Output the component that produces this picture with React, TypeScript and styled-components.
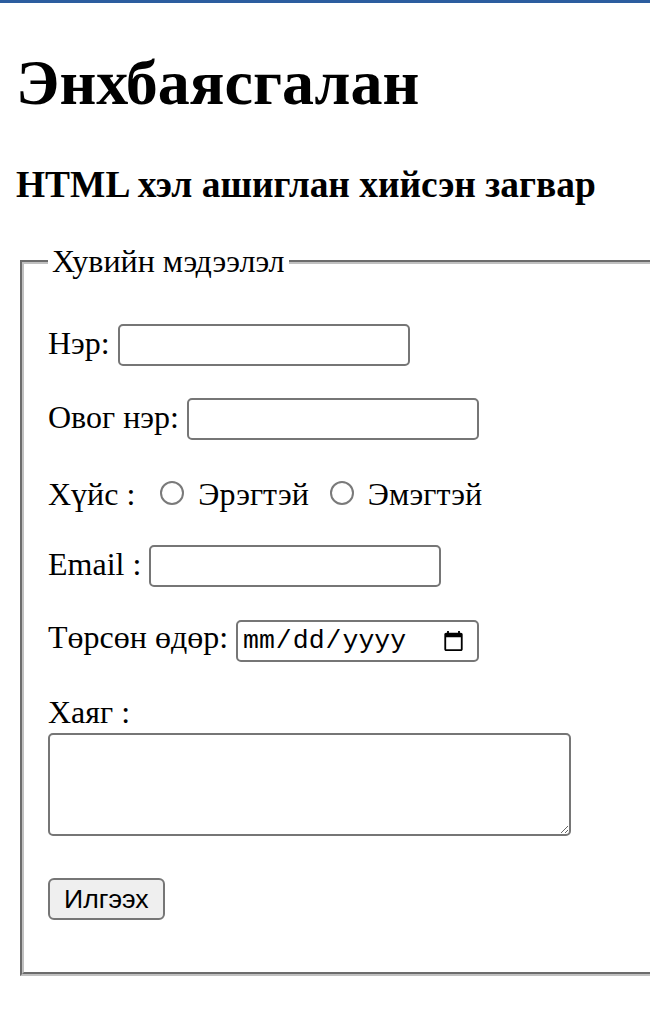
import React from 'react';
import styled, { createGlobalStyle } from 'styled-components';

const GlobalStyle = createGlobalStyle`
  html {
    border-top: 3px solid #2c5d9f;
    overflow: hidden;
  }
  body {
    margin: 0 0 16px 16px;
    font-family: "Liberation Serif", "Times New Roman", serif;
    font-size: 32px;
    color: #000;
    background: #fff;
  }
`;

const Title = styled.h1`
  font-size: 64px;
  font-weight: bold;
  margin: 42.88px 0;
`;

const Subtitle = styled.h3`
  font-size: 37.44px;
  font-weight: bold;
  margin: 37.44px 0;
`;

// the box runs on past the right edge of the window
const FieldSet = styled.fieldset`
  margin: 0 -60px 0 4px;
  padding: 12.2px 24px 20px;
  border: 4px groove #c0c0c0;
`;

const Legend = styled.legend`
  padding: 0 4px;
  font-size: 32px;
`;

const Row = styled.p<{ $top?: number }>`
  margin: ${(p) => p.$top ?? 32}px 0 32px;
`;

const GenderLabel = styled.span`
  margin-right: 4px;
`;

const TextInput = styled.input`
  box-sizing: border-box;
  width: 292px;
  height: 42px;
  margin: 0;
  padding: 2px 4px;
  border: 2px solid #767676;
  border-radius: 5px;
  font-family: "Liberation Sans", Arial, sans-serif;
  font-size: 26.67px;
`;

const Radio = styled.input`
  appearance: none;
  box-sizing: border-box;
  width: 24px;
  height: 24px;
  margin: 9px 6px 0 13px;
  border: 2px solid #7a7a7a;
  border-radius: 50%;
  background: #fff;
`;

const DateInput = styled.input`
  box-sizing: border-box;
  width: 243px;
  height: 42px;
  margin: 0;
  padding: 0 12px 0 4px;
  border: 2px solid #767676;
  border-radius: 5px;
  font-family: "Liberation Mono", "Courier New", monospace;
  font-size: 26.5px;
  color: #000;

  &::-webkit-calendar-picker-indicator {
    width: 23px;
    height: 23px;
    padding: 0;
    margin-left: 8px;
  }
`;

const TextArea = styled.textarea`
  box-sizing: border-box;
  width: 523px;
  height: 103px;
  margin: 2px 0 0;
  border: 2px solid #767676;
  border-radius: 5px;
  font-family: "Liberation Mono", monospace;
  font-size: 26px;
`;

const SubmitButton = styled.button`
  box-sizing: border-box;
  height: 42px;
  margin: 0;
  padding: 2px 14px;
  border: 2px solid #767676;
  border-radius: 6px;
  background: #efefef;
  color: #000;
  font-family: "Liberation Sans", Arial, sans-serif;
  font-size: 26.67px;
`;

export default function App() {
  return (
    <>
      <GlobalStyle />
      <Title>Энхбаясгалан</Title>
      <Subtitle>HTML хэл ашиглан хийсэн загвар</Subtitle>
      <form onSubmit={(e) => e.preventDefault()}>
        <FieldSet>
          <Legend>Хувийн мэдээлэл</Legend>
          <Row>
            Нэр: <TextInput type="text" name="firstName" />
          </Row>
          <Row>
            Овог нэр: <TextInput type="text" name="lastName" />
          </Row>
          <Row>
            <GenderLabel>Хүйс :</GenderLabel>{' '}
            <Radio type="radio" name="gender" value="male" /> Эрэгтэй{' '}
            <Radio type="radio" name="gender" value="female" /> Эмэгтэй
          </Row>
          <Row>
            Email : <TextInput type="email" name="email" />
          </Row>
          <Row>
            Төрсөн өдөр: <DateInput type="date" name="birthday" />
          </Row>
          <Row>
            Хаяг :<br />
            <TextArea name="address" />
          </Row>
          <Row $top={34}>
            <SubmitButton type="submit">Илгээх</SubmitButton>
          </Row>
        </FieldSet>
      </form>
    </>
  );
}
